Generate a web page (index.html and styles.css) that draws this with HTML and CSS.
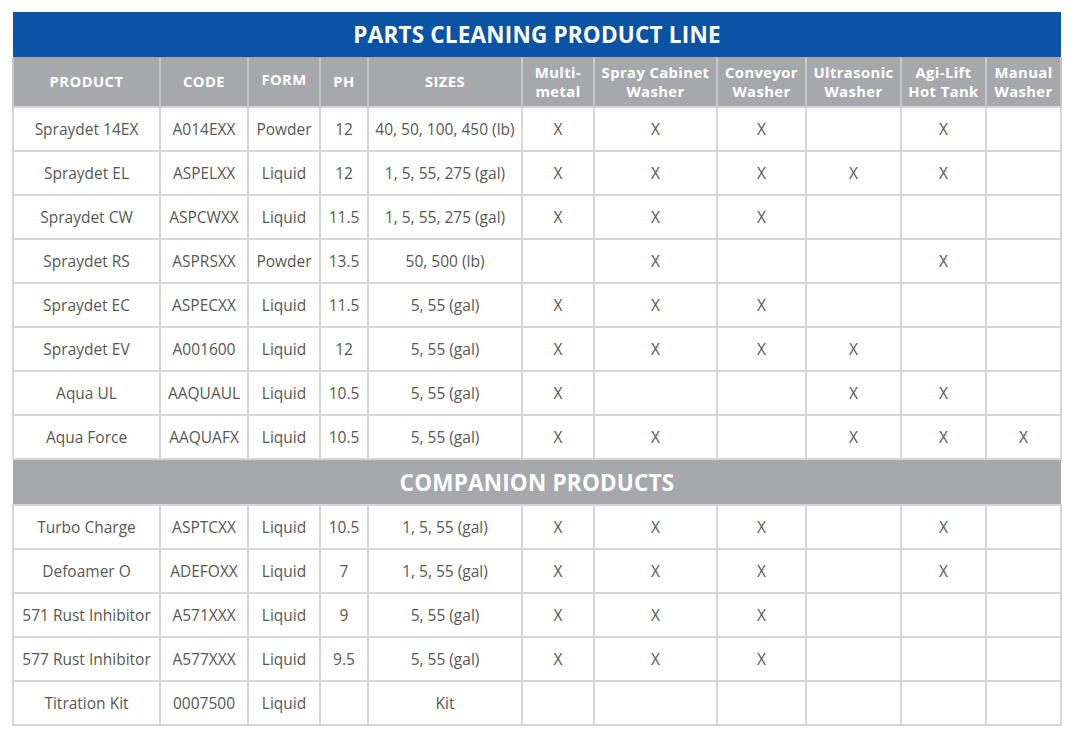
FILE: index.html
```html
<!DOCTYPE html>
<html>
<head>
<meta charset="utf-8">
<link rel="stylesheet" href="styles.css">
</head>
<body>
<table class="parts">
  <colgroup>
    <col style="width:147px"><col style="width:88px"><col style="width:72px"><col style="width:48px"><col style="width:154px"><col style="width:72px"><col style="width:123px"><col style="width:89px"><col style="width:95px"><col style="width:85px"><col style="width:75px">
  </colgroup>
  <tr class="title"><th colspan="11">PARTS CLEANING PRODUCT LINE</th></tr>
  <tr class="head">
    <th>PRODUCT</th><th>CODE</th><th class="up">FORM</th><th>PH</th><th>SIZES</th>
    <th>Multi-<br>metal</th><th>Spray Cabinet<br>Washer</th><th>Conveyor<br>Washer</th><th>Ultrasonic<br>Washer</th><th>Agi-Lift<br>Hot Tank</th><th>Manual<br>Washer</th>
  </tr>
  <tr><td>Spraydet 14EX</td><td>A014EXX</td><td>Powder</td><td>12</td><td>40, 50, 100, 450 (lb)</td><td>X</td><td>X</td><td>X</td><td></td><td>X</td><td></td></tr>
  <tr><td>Spraydet EL</td><td>ASPELXX</td><td>Liquid</td><td>12</td><td>1, 5, 55, 275 (gal)</td><td>X</td><td>X</td><td>X</td><td>X</td><td>X</td><td></td></tr>
  <tr><td>Spraydet CW</td><td>ASPCWXX</td><td>Liquid</td><td>11.5</td><td>1, 5, 55, 275 (gal)</td><td>X</td><td>X</td><td>X</td><td></td><td></td><td></td></tr>
  <tr><td>Spraydet RS</td><td>ASPRSXX</td><td>Powder</td><td>13.5</td><td>50, 500 (lb)</td><td></td><td>X</td><td></td><td></td><td>X</td><td></td></tr>
  <tr><td>Spraydet EC</td><td>ASPECXX</td><td>Liquid</td><td>11.5</td><td>5, 55 (gal)</td><td>X</td><td>X</td><td>X</td><td></td><td></td><td></td></tr>
  <tr><td>Spraydet EV</td><td>A001600</td><td>Liquid</td><td>12</td><td>5, 55 (gal)</td><td>X</td><td>X</td><td>X</td><td>X</td><td></td><td></td></tr>
  <tr><td>Aqua UL</td><td>AAQUAUL</td><td>Liquid</td><td>10.5</td><td>5, 55 (gal)</td><td>X</td><td></td><td></td><td>X</td><td>X</td><td></td></tr>
  <tr><td>Aqua Force</td><td>AAQUAFX</td><td>Liquid</td><td>10.5</td><td>5, 55 (gal)</td><td>X</td><td>X</td><td></td><td>X</td><td>X</td><td>X</td></tr>
  <tr class="section"><th colspan="11">COMPANION PRODUCTS</th></tr>
  <tr><td>Turbo Charge</td><td>ASPTCXX</td><td>Liquid</td><td>10.5</td><td>1, 5, 55 (gal)</td><td>X</td><td>X</td><td>X</td><td></td><td>X</td><td></td></tr>
  <tr><td>Defoamer O</td><td>ADEFOXX</td><td>Liquid</td><td>7</td><td>1, 5, 55 (gal)</td><td>X</td><td>X</td><td>X</td><td></td><td>X</td><td></td></tr>
  <tr><td>571 Rust Inhibitor</td><td>A571XXX</td><td>Liquid</td><td>9</td><td>5, 55 (gal)</td><td>X</td><td>X</td><td>X</td><td></td><td></td><td></td></tr>
  <tr><td>577 Rust Inhibitor</td><td>A577XXX</td><td>Liquid</td><td>9.5</td><td>5, 55 (gal)</td><td>X</td><td>X</td><td>X</td><td></td><td></td><td></td></tr>
  <tr><td>Titration Kit</td><td>0007500</td><td>Liquid</td><td></td><td>Kit</td><td></td><td></td><td></td><td></td><td></td><td></td></tr>
</table>
</body>
</html>
```
FILE: styles.css
```css
html, body {
  margin: 0;
  padding: 0;
  background: #ffffff;
}
body {
  padding: 12px;
  font-family: "Open Sans", "Liberation Sans", sans-serif;
}
.parts {
  width: 1048px;
  table-layout: fixed;
  border-collapse: collapse;
}
.parts td {
  height: 42px;
  padding: 0 1px;
  border: 2px solid #d6d6d6;
  text-align: center;
  vertical-align: middle;
  font-size: 15.5px;
  color: #575757;
  white-space: nowrap;
}
.title th {
  height: 45px;
  padding: 0;
  background: #0b54a5;
  color: #ffffff;
  font-size: 22.5px;
  font-weight: 700;
  letter-spacing: 0.2px;
  text-align: center;
  border: none;
}
.head th {
  height: 44px;
  padding: 0 1px;
  background: #a7a8ab;
  color: #ffffff;
  font-size: 14.8px;
  font-weight: 700;
  line-height: 19px;
  letter-spacing: 0.4px;
  border-left: 2px solid #c6c7c9;
  border-right: 2px solid #c6c7c9;
  white-space: nowrap;
}
.head th.up {
  padding-bottom: 5px;
}
.section th {
  height: 44px;
  padding: 0;
  background: #a7a8ab;
  color: #ffffff;
  font-size: 22.5px;
  font-weight: 700;
  letter-spacing: 0.2px;
  border: none;
}
```
